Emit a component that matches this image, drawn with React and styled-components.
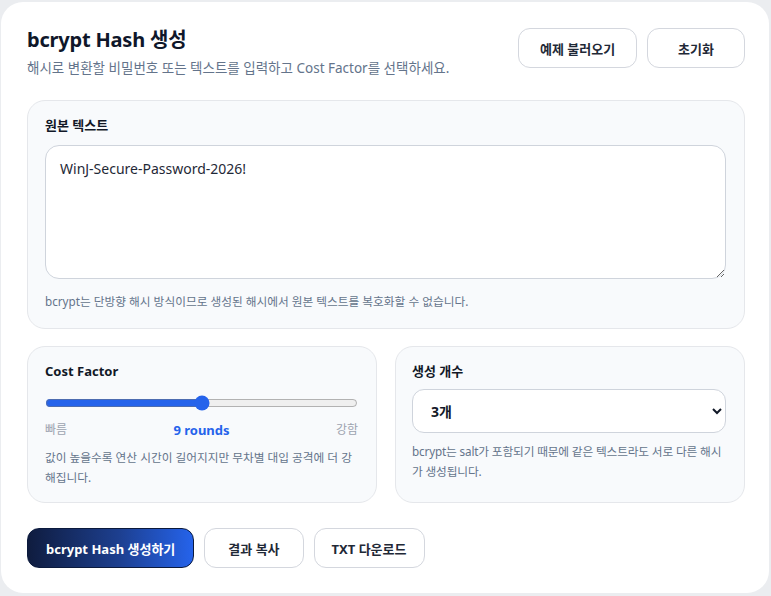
import React, {useState} from 'react'
import styled, {createGlobalStyle} from 'styled-components';

const GlobalStyle = createGlobalStyle`
    html, body {
        margin: 0;
        padding: 0;
        background: #ebedf0;
    }
    body {
        font-family: "Noto Sans", "Noto Sans CJK KR", sans-serif;
        color: #111827;
    }
    * { box-sizing: border-box; }
`;
const Page = styled.div`
    padding: 2px 2px 3px 1px;
`;
const Card = styled.div`
    background: #ffffff;
    border-radius: 22px;
    padding: 24px 24px 25px 26px;
    display: flex;
    flex-direction: column;
`;
const Header = styled.div`
    display: flex;
    justify-content: space-between;
    align-items: flex-start;
    margin-bottom: 22px;
`;
const TitleBlock = styled.div`
    display: flex;
    flex-direction: column;
`;
const Title = styled.h1`
    margin: 0;
    font-size: 20px;
    line-height: 28px;
    font-weight: 700;
    color: #0f172a;
    letter-spacing: -0.2px;
`;
const Subtitle = styled.p`
    margin: 4px 0 0 0;
    font-size: 13.5px;
    line-height: 20px;
    color: #64748b;
`;
const ButtonRow = styled.div`
    display: flex;
    gap: 10px;
    padding-top: 2px;
`;
const Button = styled.button`
    height: 40px;
    padding: 0 ${p => p.$pad || 20}px;
    border-radius: 12px;
    border: 1px solid ${p => p.$primary ? '#0b1a3d' : '#d4d7de'};
    background: ${p => p.$primary ? 'linear-gradient(90deg, #0f1c3f 0%, #1d3f8f 55%, #2563eb 100%)' : '#ffffff'};
    color: ${p => p.$primary ? '#ffffff' : '#1f2937'};
    font-family: inherit;
    font-size: 13px;
    font-weight: 700;
    cursor: pointer;
`;
const Section = styled.div`
    background: #f8fafc;
    border: 1px solid #e5e7eb;
    border-radius: 18px;
    padding: 14px 18px ${p => p.$bottom || 17}px ${p => p.$left || 17}px;
    display: flex;
    flex-direction: column;
`;
const Label = styled.label`
    font-size: 13px;
    line-height: 20px;
    font-weight: 700;
    color: #111827;
    margin-bottom: ${p => p.$gap || 10}px;
`;
const TextArea = styled.textarea`
    width: 100%;
    height: 134px;
    border: 1px solid #cfd4dc;
    border-radius: 14px;
    padding: 13px 14px;
    font-family: inherit;
    font-size: 14px;
    line-height: 20px;
    color: #1f2937;
    background: #ffffff;
    outline: none;
`;
const Hint = styled.p`
    margin: ${p => p.$top || 12}px 0 0 0;
    font-size: 11.7px;
    line-height: 20px;
    letter-spacing: ${p => p.$tight ? '-0.15px' : '0'};
    color: #64748b;
`;
const Grid = styled.div`
    display: grid;
    grid-template-columns: 1fr 1fr;
    gap: 18px;
    margin-top: 17px;
`;
const Range = styled.input`
    width: 100%;
    margin: 8px 0 0 0;
    accent-color: #2563eb;
`;
const Scale = styled.div`
    display: flex;
    justify-content: space-between;
    align-items: center;
    margin-top: 10px;
    font-size: 12px;
    line-height: 18px;
    color: #9ca3af;
`;
const Rounds = styled.span`
    font-size: 13px;
    font-weight: 700;
    color: #2563eb;
`;
const Select = styled.select`
    width: 100%;
    height: 44px;
    border: 1px solid #cfd4dc;
    border-radius: 12px;
    padding: 0 10px 0 14px;
    font-family: inherit;
    font-size: 14px;
    font-weight: 700;
    color: #111827;
    background: #ffffff;
    outline: none;
`;
const Actions = styled.div`
    display: flex;
    gap: 10px;
    margin-top: 25px;
`;

function App() {
    const [text, setText] = useState("WinJ-Secure-Password-2026!");
    const [cost, setCost] = useState(9);
    const [count, setCount] = useState("3");
    return (
        <Page>
            <GlobalStyle/>
            <Card>
                <Header>
                    <TitleBlock>
                        <Title>bcrypt Hash 생성</Title>
                        <Subtitle>해시로 변환할 비밀번호 또는 텍스트를 입력하고 Cost Factor를 선택하세요.</Subtitle>
                    </TitleBlock>
                    <ButtonRow>
                        <Button $pad={21}>예제 불러오기</Button>
                        <Button $pad={30}>초기화</Button>
                    </ButtonRow>
                </Header>
                <Section>
                    <Label>원본 텍스트</Label>
                    <TextArea value={text} onChange={e => setText(e.target.value)}/>
                    <Hint>bcrypt는 단방향 해시 방식이므로 생성된 해시에서 원본 텍스트를 복호화할 수 없습니다.</Hint>
                </Section>
                <Grid>
                    <Section $bottom={15}>
                        <Label $gap={6}>Cost Factor</Label>
                        <Range type="range" min="4" max="14" value={cost} onChange={e => setCost(Number(e.target.value))}/>
                        <Scale>
                            <span>빠름</span>
                            <Rounds>{cost} rounds</Rounds>
                            <span>강함</span>
                        </Scale>
                        <Hint $top={8}>값이 높을수록 연산 시간이 길어지지만 무차별 대입 공격에 더 강해집니다.</Hint>
                    </Section>
                    <Section $bottom={15} $left={16}>
                        <Label $gap={8}>생성 개수</Label>
                        <Select value={count} onChange={e => setCount(e.target.value)}>
                            <option value="1">1개</option>
                            <option value="3">3개</option>
                            <option value="5">5개</option>
                            <option value="10">10개</option>
                        </Select>
                        <Hint $top={8} $tight>bcrypt는 salt가 포함되기 때문에 같은 텍스트라도 서로 다른 해시가 생성됩니다.</Hint>
                    </Section>
                </Grid>
                <Actions>
                    <Button $primary $pad={18}>bcrypt Hash 생성하기</Button>
                    <Button $pad={23}>결과 복사</Button>
                    <Button $pad={17}>TXT 다운로드</Button>
                </Actions>
            </Card>
        </Page>
    )
}

export default App
